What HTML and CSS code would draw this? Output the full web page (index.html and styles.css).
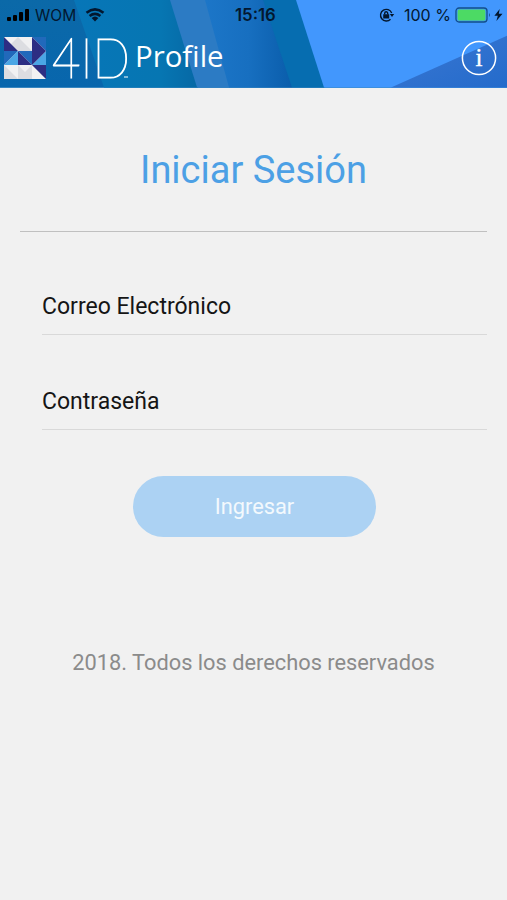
FILE: index.html
```
<!DOCTYPE html>
<html lang="es">

<head>
  <meta charset="UTF-8">
  <meta name="viewport" content="width=device-width, initial-scale=1.0">
  <title>4ID Profile</title>
  <link rel="stylesheet" href="styles.css">
</head>

<body>
  <header>
    <svg class="fondo" viewBox="0 0 507 88" preserveAspectRatio="none">
      <defs>
        <linearGradient id="g1" x1="0" x2="0" y1="0" y2="1">
          <stop offset="0" stop-color="#0b69a8" />
          <stop offset="1" stop-color="#0866ad" />
        </linearGradient>
        <linearGradient id="g2" x1="0" x2="1" y1="0" y2="0">
          <stop offset="0" stop-color="#0776b8" />
          <stop offset="0.7" stop-color="#0676b2" />
          <stop offset="1" stop-color="#0668a5" />
        </linearGradient>
        <linearGradient id="g3" x1="0" x2="1" y1="0" y2="0">
          <stop offset="0" stop-color="#1c76c8" />
          <stop offset="0.5" stop-color="#176fc0" />
          <stop offset="1" stop-color="#0a5dab" />
        </linearGradient>
        <linearGradient id="g4" x1="0" x2="1" y1="0" y2="1">
          <stop offset="0" stop-color="#3b77d2" />
          <stop offset="1" stop-color="#246bcb" />
        </linearGradient>
      </defs>
      <rect width="507" height="88" fill="url(#g1)" />
      <path d="M74 0H172L198 88H104Z" fill="url(#g2)" />
      <path d="M170 0H208L230 88H197Z" fill="#2c7bc4" />
      <path d="M205 0H264L292 88H229Z" fill="url(#g3)" />
      <path d="M263 0H297L325 88H292Z" fill="#066db0" />
      <path d="M296 0H507V88H324Z" fill="#4297fd" />
      <path d="M507 36V88H391Z" fill="url(#g4)" />
    </svg>
    <div class="status">
      <svg class="signal" width="24" height="14" viewBox="0 0 24 14">
        <rect x="0" y="9" width="4" height="4" rx="1" />
        <rect x="6" y="7" width="4" height="6" rx="1" />
        <rect x="12" y="4" width="4" height="9" rx="1" />
        <rect x="18" y="1" width="4" height="12" rx="1" />
      </svg>
      <span class="carrier">WOM</span>
      <svg class="wifi" width="20" height="14" viewBox="0 0 20 14">
        <path d="M1.5 4.8Q10-2 18.5 4.8M4.6 8Q10 3.8 15.4 8" />
        <path class="dot" d="M6.6 10Q10 7 13.4 10L10 13.5Z" />
      </svg>
      <span class="hora">15:16</span>
      <svg class="lock" width="16" height="14" viewBox="0 0 16 14">
        <path d="M11.5 11.2A5.8 5.8 0 1 1 12.7 5" />
        <path class="fill" d="M10.8 6H15.2L13 9ZM4.2 6.2H10.2V10.5H4.2Z" />
        <path d="M5.7 6.5V5.2A1.5 1.5 0 0 1 8.7 5.2V6.5" />
      </svg>
      <span class="porcentaje">100 %</span>
      <svg class="battery" width="50" height="16" viewBox="0 0 50 16">
        <rect x="1" y="1" width="31" height="14" rx="3" fill="none" stroke="#124f89" stroke-width="1.3" />
        <rect x="2.6" y="2.6" width="27.8" height="10.8" rx="1.5" fill="#4cda64" />
        <path d="M34 6Q36 8 34 10Z" fill="#17579a" />
        <path d="M44.7 2L39.4 8.8H42.8L41.4 14L47.5 6.8H43.8Z" fill="#03172f" />
      </svg>
    </div>
    <div class="barra">
      <svg class="logo" width="42" height="42" viewBox="0 0 42 42">
        <rect width="42" height="42" fill="#f1f1f2" />
        <path d="M14 0L28 14H0ZM0 28L14 42H0ZM14 28L28 42H14ZM28 28V42H14Z" fill="#dcdde1" />
        <path d="M28 0H42V14ZM0 14H14L0 28ZM14 14H28V28Z" fill="#2169bb" />
        <path d="M14 14V28H0ZM42 14V28H28Z" fill="#4ba6e5" />
        <path d="M0 0L14 14H0ZM28 0L42 14L28 28H14V14L28 28ZM28 28H42V42Z" fill="#2d2e83" />
      </svg>
      <svg class="marca" width="82" height="72" viewBox="0 0 82 72">
        <text x="3" y="56" textLength="78" lengthAdjust="spacingAndGlyphs">4ID</text>
        <path d="M75 55H79" />
      </svg>
      <span class="profile">Profile</span>
      <svg class="info" width="36" height="36" viewBox="0 0 36 36">
        <circle cx="18" cy="18" r="16.6" />
        <text x="18" y="26" text-anchor="middle">i</text>
      </svg>
    </div>
  </header>

  <main>
    <h1>Iniciar Sesión</h1>
    <form>
      <input type="text" placeholder="Correo Electrónico">
      <input type="password" placeholder="Contraseña">
      <button type="button" disabled>Ingresar</button>
    </form>
    <p>2018. Todos los derechos reservados</p>
  </main>
</body>

</html>
```
FILE: styles.css
```
* {
  margin: 0;
  padding: 0;
  box-sizing: border-box;
}

body {
  min-height: 100vh;
  background-color: #f1f1f1;
  font-family: Roboto, sans-serif;
}

header {
  position: relative;
  height: 88px;
  border-bottom: 1px solid #66a6d3;
}

.fondo {
  position: absolute;
  top: 0;
  left: 0;
  width: 100%;
  height: 87.5px;
}

.status {
  position: relative;
  height: 30px;
  display: flex;
  align-items: center;
  padding-left: 7px;
  font-family: Inter, sans-serif;
  font-size: 16px;
  color: #03172f;
}

.status svg {
  flex: none;
}

.carrier {
  width: 43px;
  margin-left: 4px;
  font-size: 15.5px;
}

.wifi {
  margin-left: 7px;
  fill: none;
  stroke: #03172f;
  stroke-width: 2.6;
}

.wifi .dot {
  fill: #03172f;
  stroke: none;
}

.hora {
  width: 44px;
  margin-left: 130px;
  font-size: 16.8px;
  font-weight: 600;
}

.lock {
  margin-left: 100px;
  fill: none;
  stroke: #03172f;
  stroke-width: 1.4;
}

.lock .fill {
  fill: #03172f;
  stroke: none;
}

.porcentaje {
  width: 47px;
  margin-left: 9px;
  white-space: nowrap;
}

.battery {
  margin-left: 4px;
}

.barra {
  position: relative;
  height: 58px;
  display: flex;
  align-items: center;
  padding: 0 10px 2px 4px;
  color: #fff;
}

.marca {
  margin-left: 3px;
  overflow: visible;
  fill: #fff;
  stroke: #fff;
}

.marca text {
  font-family: Lato, sans-serif;
  font-size: 55px;
  font-weight: 100;
  stroke-width: 1.2;
}

.profile {
  margin: 0 0 5px 4px;
  font-family: "Open Sans", sans-serif;
  font-size: 29.4px;
  line-height: 40px;
}

.info {
  margin-left: auto;
}

.info circle {
  fill: none;
  stroke: #fff;
  stroke-width: 1.5;
}

.info text {
  fill: #fff;
  stroke: #fff;
  stroke-width: 0.4;
  font-family: "Liberation Serif", serif;
  font-size: 25px;
}

main {
  padding: 0 20px;
}

h1 {
  height: 144px;
  padding-top: 59px;
  border-bottom: 1px solid #c0c0c0;
  color: #4ca0e5;
  font-size: 38px;
  font-weight: 400;
  line-height: 46px;
  text-align: center;
}

form {
  display: flex;
  flex-direction: column;
  padding: 46px 0 0 22px;
}

input {
  height: 57px;
  margin-bottom: 38px;
  border: none;
  border-bottom: 1px solid #d9d9d9;
  background: none;
  font-family: Roboto, sans-serif;
  font-size: 23px;
}

input::placeholder {
  color: #151515;
}

button {
  width: 243px;
  height: 61px;
  margin: 8px 0 0 91px;
  border: none;
  border-radius: 31px;
  background-color: #acd2f3;
  color: #f3f9fd;
  font-family: Roboto, sans-serif;
  font-size: 21.8px;
}

p {
  margin-top: 112px;
  color: #8b8b8b;
  font-size: 21.8px;
  line-height: 28px;
  text-align: center;
}
```
